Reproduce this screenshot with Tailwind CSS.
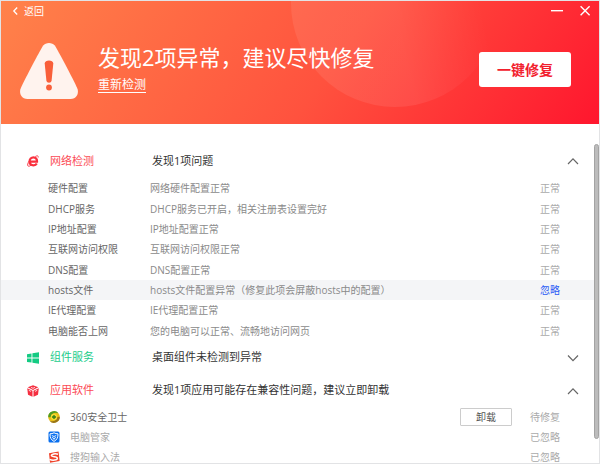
<!DOCTYPE html>
<html lang="zh-CN">
<head>
<meta charset="utf-8">
<meta name="viewport" content="width=device-width, initial-scale=1">
<title>网络诊断</title>
<script src="https://cdn.jsdelivr.net/npm/@tailwindcss/browser@4"></script>
</head>
<body class="flex h-screen flex-col overflow-hidden border border-[#e2e3e5] bg-white font-['Open_Sans','Noto_Sans_CJK_SC',sans-serif] text-[10px] text-[#666]">

<header class="relative flex h-[123px] shrink-0 flex-col overflow-hidden bg-linear-[125deg] from-[#ff824a] via-[#ff523e] via-55% to-[#ff162e] text-white">
  <svg class="absolute top-0 left-[290px] h-[106px] w-[208px]" viewBox="0 0 208 106" aria-hidden="true">
    <defs><linearGradient id="disc" x1="0" y1="0.6" x2="1" y2="0.4"><stop offset="0" stop-color="#fff" stop-opacity=".08"/><stop offset=".5" stop-color="#fff" stop-opacity=".08"/><stop offset=".9" stop-color="#fff" stop-opacity="0"/></linearGradient></defs>
    <circle cx="104" cy="2" r="104" fill="url(#disc)"/>
  </svg>
  <div class="relative flex h-5 shrink-0 items-center justify-between pr-2 pl-[11px]">
    <button type="button" class="flex items-center gap-1 text-[10px] leading-5">
      <svg class="h-2 w-2" viewBox="0 0 8 8" fill="none" stroke="#fff" stroke-width="1.3" aria-hidden="true"><path d="M5.2 .5 1.8 4l3.4 3.5"/></svg>返回
    </button>
    <div class="flex items-center gap-4">
      <button type="button" aria-label="最小化"><svg class="h-3 w-3" viewBox="0 0 12 12" stroke="#fff" stroke-width="1.4"><path d="M0 5.700h12"/></svg></button>
      <button type="button" aria-label="关闭"><svg class="h-3 w-3" viewBox="0 0 12 12" stroke="#fff" stroke-width="1.4"><path d="m1.600 1.200 9 9m0-9-9 9"/></svg></button>
    </div>
  </div>
  <div class="relative flex grow items-start pr-7 pl-[18px]">
    <svg class="mt-[21px] h-[58px] w-[60px] shrink-0" viewBox="0 0 60 58" aria-hidden="true">
      <path d="M24.2 3.6C26.700 0 33.300 0 35.800 3.600C38.300 7.200 57.200 43 58.600 47.200C60 52 57 57 51.500 57H8.500C3 57 0 52 1.400 47.200C2.800 43 21.700 7.200 24.200 3.600Z" fill="#fff3ee"/>
      <path d="M25.700 21.500C25.700 17.500 34.300 17.500 34.300 21.500L32.600 38.500C32.200 41.400 27.800 41.400 27.400 38.500Z" fill="#f95f3a"/>
      <circle cx="30" cy="45.500" r="2.900" fill="#f95f3a"/>
    </svg>
    <div class="mt-5 ml-[19px] grow">
      <h1 class="text-[22px] leading-8">发现2项异常，建议尽快修复</h1>
      <a href="#" class="mt-[5px] inline-block border-b border-white text-[12px] leading-[14px]">重新检测</a>
    </div>
    <button type="button" class="mt-[31px] h-[35px] w-[92px] shrink-0 rounded-[3px] bg-white text-[14px] font-bold text-[#f2202d]">一键修复</button>
  </div>
</header>

<main class="flex min-h-0 grow pt-5">
  <div class="min-w-0 grow overflow-hidden">
    <section>
      <div class="flex h-[34px] items-center pr-[15px] pl-[26px] text-[11px]">
        <svg class="h-3 w-3 shrink-0" viewBox="0 0 12 12" fill="none" stroke="#f9303e" aria-hidden="true"><path d="M3 6.600H10C10.200 4 8.600 2.300 6.500 2.300C4.200 2.300 2.600 4.100 2.600 6.300C2.600 8.600 4.200 10.300 6.500 10.300C8 10.300 9.200 9.600 9.800 8.500" stroke-width="2.300"/><path d="M8.300 1.500C10.200.4 11.600.6 11.200 2.500M2.200 6C.5 8.400 0 11 1.500 11.200C2.400 11.300 3.300 10.900 4 10.200" stroke-width=".9"/></svg>
        <h2 class="ml-[11px] w-[102px] shrink-0 text-[#fb4a55]">网络检测</h2>
        <p class="grow text-[#333]">发现1项问题</p>
        <button type="button" aria-label="收起网络检测"><svg class="h-3 w-3" viewBox="0 0 12 12" fill="none" stroke="#666" stroke-width="1.2"><path d="m1 9 5-5.200L11 9"/></svg></button>
      </div>
      <table class="h-[163px] w-full table-fixed text-left leading-4">
        <colgroup><col class="w-[149px]"><col><col class="w-20"></colgroup>
        <tbody>
          <tr><th scope="row" class="pl-[47px] font-normal">硬件配置</th><td class="text-[#8a8a8a]">网络硬件配置正常</td><td class="pr-[34px] text-right text-[#aaa]">正常</td></tr>
          <tr><th scope="row" class="pl-[47px] font-normal">DHCP服务</th><td class="text-[#8a8a8a]">DHCP服务已开启，相关注册表设置完好</td><td class="pr-[34px] text-right text-[#aaa]">正常</td></tr>
          <tr><th scope="row" class="pl-[47px] font-normal">IP地址配置</th><td class="text-[#8a8a8a]">IP地址配置正常</td><td class="pr-[34px] text-right text-[#aaa]">正常</td></tr>
          <tr><th scope="row" class="pl-[47px] font-normal">互联网访问权限</th><td class="text-[#8a8a8a]">互联网访问权限正常</td><td class="pr-[34px] text-right text-[#aaa]">正常</td></tr>
          <tr><th scope="row" class="pl-[47px] font-normal">DNS配置</th><td class="text-[#8a8a8a]">DNS配置正常</td><td class="pr-[34px] text-right text-[#aaa]">正常</td></tr>
          <tr class="bg-[#f4f5f7]"><th scope="row" class="pl-[47px] font-normal">hosts文件</th><td class="text-[#8a8a8a]">hosts文件配置异常（修复此项会屏蔽hosts中的配置）</td><td class="pr-[34px] text-right"><a href="#" class="text-[#2c5bf5]">忽略</a></td></tr>
          <tr><th scope="row" class="pl-[47px] font-normal">IE代理配置</th><td class="text-[#8a8a8a]">IE代理配置正常</td><td class="pr-[34px] text-right text-[#aaa]">正常</td></tr>
          <tr><th scope="row" class="pl-[47px] font-normal">电脑能否上网</th><td class="text-[#8a8a8a]">您的电脑可以正常、流畅地访问网页</td><td class="pr-[34px] text-right text-[#aaa]">正常</td></tr>
        </tbody>
      </table>
    </section>

    <section class="flex h-[33px] items-center pr-[15px] pl-[26px] text-[11px]">
      <svg class="h-3 w-3 shrink-0" viewBox="0 0 12 12" fill="#14cb83" aria-hidden="true"><path d="M0 2.200 4.500 1.500V5.600H0ZM5.400 1.300 12 .3V5.600H5.400ZM0 6.500H4.500V10.600L0 9.900ZM5.400 6.500H12V11.800L5.400 10.800Z"/></svg>
      <h2 class="ml-[11px] w-[102px] shrink-0 text-[#22cd8b]">组件服务</h2>
      <p class="grow text-[#333]">桌面组件未检测到异常</p>
      <button type="button" aria-label="展开组件服务"><svg class="h-3 w-3" viewBox="0 0 12 12" fill="none" stroke="#666" stroke-width="1.2"><path d="m1 3.500 5 5.200 5-5.200"/></svg></button>
    </section>

    <section>
      <div class="flex h-[33px] items-center pr-[15px] pl-[26px] text-[11px]">
        <svg class="h-3 w-3 shrink-0" viewBox="0 0 12 12" fill="#f52f40" aria-hidden="true"><path d="M6 .2 11.300 2.300 6 4.900 .7 2.300ZM.2 3.200 5.500 5.800V11.800L1 9.700ZM11.800 3.200 6.500 5.800V11.800L11 9.700Z"/><path d="m1.800 5.300 2.200 1.100M10.200 5.300l-2.200 1.100M4 2.400l2 .9 2-.9" stroke="#fff" stroke-width=".8" fill="none"/></svg>
        <h2 class="ml-[11px] w-[102px] shrink-0 text-[#fb4a55]">应用软件</h2>
        <p class="grow text-[#333]">发现1项应用可能存在兼容性问题，建议立即卸载</p>
        <button type="button" aria-label="收起应用软件"><svg class="h-3 w-3" viewBox="0 0 12 12" fill="none" stroke="#666" stroke-width="1.2"><path d="m1 9 5-5.200L11 9"/></svg></button>
      </div>
      <table class="h-[60px] w-full table-fixed text-left leading-3">
        <colgroup><col><col class="w-[54px]"><col class="w-20"></colgroup>
        <tbody>
          <tr class="h-5">
            <th scope="row" class="pl-[47px] font-normal"><div class="flex items-center gap-[10px]">
              <svg class="h-3 w-3" viewBox="0 0 12 12" aria-hidden="true"><circle cx="6" cy="6" r="5.800" fill="#e9bd18"/><path d="M.2 6A5.800 5.800 0 0 1 10.500 2.300C7 .8 3.500 2.200 3 5.500C2 6.500 1 6.500.2 6Z" fill="#4f9c22"/><path d="M11.800 6A5.800 5.800 0 0 1 1.500 9.700C5 11.200 8.500 9.800 9 6.500C10 5.500 11 5.500 11.800 6Z" fill="#98751a"/><circle cx="6" cy="6" r="3.200" fill="#f4da31"/><path d="M6 4v4M4 6h4" stroke="#2f7d18" stroke-width="1.300"/></svg>
              <span>360安全卫士</span></div></th>
            <td><button type="button" class="block h-[18px] w-[52px] rounded-[1px] border border-[#ccc] bg-white text-[#555]">卸载</button></td>
            <td class="pr-[34px] text-right text-[#aaa]">待修复</td>
          </tr>
          <tr class="h-5 text-[#aaa]">
            <th scope="row" class="pl-[47px] font-normal"><div class="flex items-center gap-[10px]">
              <svg class="h-3 w-3" viewBox="0 0 12 12" aria-hidden="true"><rect x=".5" y=".5" width="11" height="11" rx="1.500" fill="#0b70ee"/><path d="M6 1.800C7.300 2.600 8.600 2.800 10 2.800C10.100 6.300 9 8.900 6 10.400C3 8.900 1.900 6.300 2 2.800C3.400 2.800 4.700 2.600 6 1.800Z" fill="#0b70ee" stroke="#fff" stroke-width="1"/><path d="m3.800 4.500 2.200 1 2.200-1M4.400 6 6 8.400 7.600 6" fill="none" stroke="#fff" stroke-width=".9"/></svg>
              <span>电脑管家</span></div></th>
            <td></td>
            <td class="pr-[34px] text-right">已忽略</td>
          </tr>
          <tr class="h-5 text-[#aaa]">
            <th scope="row" class="pl-[47px] font-normal"><div class="flex items-center gap-[10px]">
              <svg class="h-3 w-3" viewBox="0 0 12 12" aria-hidden="true"><path d="M1 2.200 10.600.5 11.600 10 2 11.800Z" fill="#f0432b"/><path d="M10 3.300C7.500 2.200 3.200 3 3.400 4.700C3.600 6.300 9.200 5.200 9.300 7.200C9.400 9.100 4.800 9.900 1.500 8.400" fill="none" stroke="#fff" stroke-width="1.500"/></svg>
              <span>搜狗输入法</span></div></th>
            <td></td>
            <td class="pr-[34px] text-right">已忽略</td>
          </tr>
        </tbody>
      </table>
    </section>
  </div>
  <div class="w-[5px] shrink-0 pb-6" aria-hidden="true"><div class="h-full rounded-full border border-[#a3a3a3] bg-[#bcbcbc]"></div></div>
</main>
</body>
</html>
